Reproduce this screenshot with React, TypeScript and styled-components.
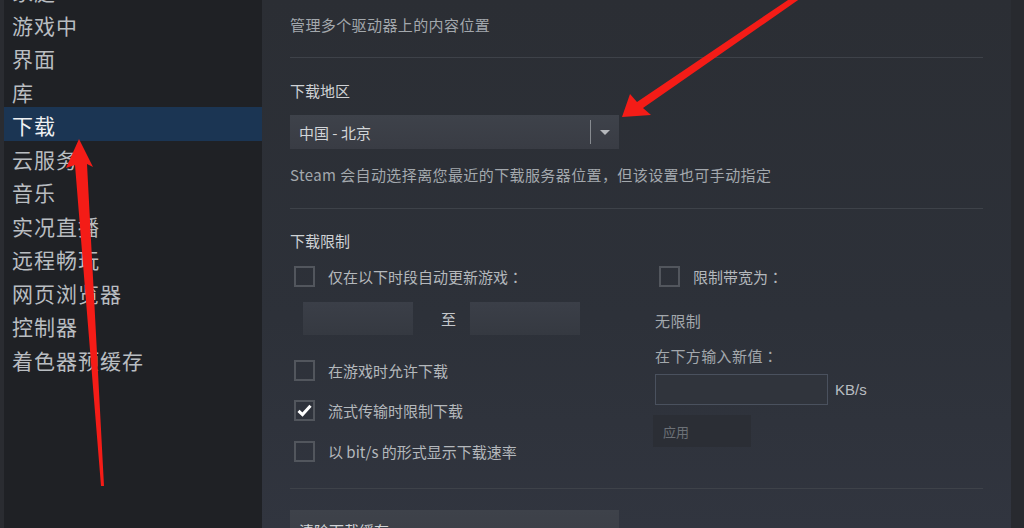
import React from 'react';
import styled, {createGlobalStyle} from 'styled-components';

const GlobalStyle = createGlobalStyle`
  html, body {
    margin: 0;
    padding: 0;
    background: #2b2e34;
  }
  body {
    font-family: "Noto Sans CJK SC", "Liberation Sans", sans-serif;
  }
`;

const Window = styled.div`
  position: relative;
  display: flex;
  width: 1024px;
  height: 528px;
  overflow: hidden;
`;

const Sidebar = styled.nav`
  width: 258px;
  flex-shrink: 0;
  border-left: 4px solid #2a2c31;
  background: #1f2125;
  overflow: hidden;
`;

const NavList = styled.ul`
  list-style: none;
  margin: -27px 0 0;
  padding: 0;
`;

const NavItem = styled.li<{ $active?: boolean }>`
  height: 33.5px;
  box-sizing: border-box;
  padding: 3px 0 0 8px;
  font-size: 21px;
  line-height: 30px;
  letter-spacing: 1px;
  white-space: nowrap;
  color: ${p => p.$active ? '#eef0f2' : '#b9bdc1'};
  background: ${p => p.$active ? '#1b3553' : 'transparent'};
`;

const Main = styled.main`
  flex: 1;
  padding: 15px 28px 0;
  background: linear-gradient(180deg, #2b2e34 0%, #2d3139 60%, #31353f 100%);
  overflow: hidden;
`;

const Scrollbar = styled.div`
  width: 13px;
  flex-shrink: 0;
  background: #282a2f;
`;

const Desc = styled.div<{ $mt?: number }>`
  margin-top: ${p => p.$mt ?? 0}px;
  font-size: 15px;
  line-height: 20px;
  letter-spacing: 0.4px;
  color: #a3a8ad;
  white-space: nowrap;
`;

const Heading = styled.div<{ $mt?: number }>`
  margin-top: ${p => p.$mt ?? 0}px;
  font-size: 15px;
  line-height: 20px;
  color: #cfd2d5;
`;

// full-width colon sits centred in the reference's font
const Colon = styled.span`
  font-family: "Noto Sans CJK TC", "Noto Sans CJK SC", sans-serif;
`;

const Divider = styled.div<{ $mt: number }>`
  margin-top: ${p => p.$mt}px;
  height: 1px;
  background: #3e4249;
`;

const Dropdown = styled.div`
  margin-top: 14px;
  width: 329px;
  height: 34px;
  display: flex;
  align-items: center;
  background: linear-gradient(180deg, #3e424a 0%, #393c44 100%);
  font-size: 15px;
  color: #d2d5d8;
`;

const DropValue = styled.span`
  flex: 1;
  padding-left: 9px;
`;

const DropToggle = styled.div`
  width: 28px;
  height: 24px;
  border-left: 1px solid #878b90;
  display: flex;
  align-items: center;
  justify-content: center;
`;

const Caret = styled.span`
  width: 0;
  height: 0;
  border-left: 5px solid transparent;
  border-right: 5px solid transparent;
  border-top: 5px solid #b5b8bc;
`;

const LimitsGrid = styled.div`
  margin-top: 15px;
  display: grid;
  grid-template-columns: 365px 1fr;
`;

const Column = styled.div`
  display: flex;
  flex-direction: column;
  align-items: flex-start;
`;

const CheckRow = styled.label<{ $mt?: number }>`
  margin-top: ${p => p.$mt ?? 0}px;
  height: 21px;
  padding-left: 4px;
  display: flex;
  align-items: center;
  gap: 13px;
  font-size: 15px;
  color: #b4b8bc;
  white-space: nowrap;
`;

const Box = styled.span`
  width: 21px;
  height: 21px;
  box-sizing: border-box;
  border: 2px solid #52565d;
  display: flex;
  align-items: center;
  justify-content: center;
`;

const TimeRow = styled.div`
  margin-top: 15px;
  padding-left: 13px;
  display: flex;
  align-items: center;
`;

const TimeInput = styled.div`
  width: 110px;
  height: 33px;
  background: linear-gradient(180deg, #3b3f48 0%, #353941 100%);
`;

const TimeSep = styled.span`
  padding: 0 14px 0 28px;
  font-size: 15px;
  color: #c4c7cb;
`;

const InputRow = styled.div`
  margin-top: 8px;
  display: flex;
  align-items: center;
  gap: 7px;
  font-family: "Liberation Sans", sans-serif;
  font-size: 15px;
  color: #b9bdc1;
`;

const RateInput = styled.div`
  width: 173px;
  height: 31px;
  box-sizing: border-box;
  border: 1px solid #4a515e;
  background: #30343c;
`;

const ApplyButton = styled.div`
  margin: 10px 0 0 -2px;
  width: 98px;
  height: 32px;
  box-sizing: border-box;
  padding-left: 10px;
  display: flex;
  align-items: center;
  background: #2b2e35;
  font-size: 13px;
  color: #6c7177;
`;

const WideButton = styled.div`
  margin-top: 21px;
  width: 329px;
  height: 40px;
  padding-left: 9px;
  box-sizing: border-box;
  display: flex;
  align-items: center;
  background: linear-gradient(180deg, #3e424a 0%, #3a3d45 100%);
  font-size: 15px;
  color: #d2d5d8;
`;

const Overlay = styled.svg`
  position: absolute;
  inset: 0;
  pointer-events: none;
`;

const navItems = ['家庭', '游戏中', '界面', '库', '下载', '云服务', '音乐', '实况直播', '远程畅玩', '网页浏览器', '控制器', '着色器预缓存'];

const CheckBox = ({checked}: { checked?: boolean }) => (
    <Box>
        {checked &&
            <svg width="15" height="13" viewBox="0 0 15 13">
                <path d="M1.5 6.8 L5.5 10.6 L13.5 1.8" fill="none" stroke="#ffffff" strokeWidth="3"/>
            </svg>}
    </Box>
);

const App = () => {
    return (
        <Window>
            <GlobalStyle/>
            <Sidebar>
                <NavList>
                    {navItems.map(item => <NavItem key={item} $active={item === '下载'}>{item}</NavItem>)}
                </NavList>
            </Sidebar>
            <Main>
                <Desc>管理多个驱动器上的内容位置</Desc>
                <Divider $mt={22}/>
                <Heading $mt={23}>下载地区</Heading>
                <Dropdown>
                    <DropValue>中国 - 北京</DropValue>
                    <DropToggle><Caret/></DropToggle>
                </Dropdown>
                <Desc $mt={16}>Steam 会自动选择离您最近的下载服务器位置，但该设置也可手动指定</Desc>
                <Divider $mt={23}/>
                <Heading $mt={22}>下载限制</Heading>
                <LimitsGrid>
                    <Column>
                        <CheckRow><CheckBox/><span>仅在以下时段自动更新游戏<Colon>：</Colon></span></CheckRow>
                        <TimeRow>
                            <TimeInput/>
                            <TimeSep>至</TimeSep>
                            <TimeInput/>
                        </TimeRow>
                        <CheckRow $mt={25}><CheckBox/>在游戏时允许下载</CheckRow>
                        <CheckRow $mt={19}><CheckBox checked/>流式传输时限制下载</CheckRow>
                        <CheckRow $mt={20}><CheckBox/>以 bit/s 的形式显示下载速率</CheckRow>
                    </Column>
                    <Column>
                        <CheckRow><CheckBox/><span>限制带宽为<Colon>：</Colon></span></CheckRow>
                        <Desc $mt={24}>无限制</Desc>
                        <Desc $mt={15}>在下方输入新值<Colon>：</Colon></Desc>
                        <InputRow>
                            <RateInput/>
                            KB/s
                        </InputRow>
                        <ApplyButton>应用</ApplyButton>
                    </Column>
                </LimitsGrid>
                <Divider $mt={26}/>
                <WideButton>清除下载缓存</WideButton>
            </Main>
            <Scrollbar/>
            <Overlay width="1024" height="528" viewBox="0 0 1024 528">
                <polygon fill="#f41c17"
                         points="79,139 93,167 87,164 104,486 101,486 75,165 66,168"/>
                <polygon fill="#f41c17"
                         points="622,117 630,94 637,102 791,-2 801,-2 643,108 651,115"/>
            </Overlay>
        </Window>
    );
};

export default App;
